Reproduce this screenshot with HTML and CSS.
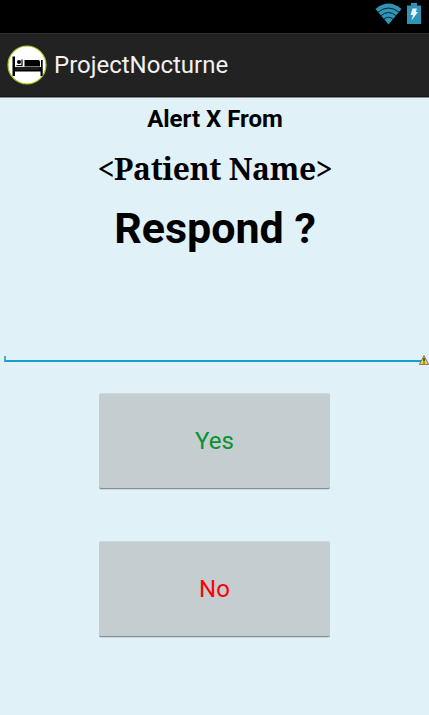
FILE: index.html
```
<!DOCTYPE html>
<html lang="en">
<head>
<meta charset="utf-8">
<title>ProjectNocturne</title>
<link rel="stylesheet" href="styles.css">
</head>
<body>
<div class="status">
  <svg class="wifi" width="27" height="22" viewBox="0 0 27 22"><path d="M0.500 6Q13.500-5 26.500 6L13.500 21.500Z" fill="#3094b7"/><path d="M2.500 9.500Q13.500 .5 24.500 9.500M5.500 13Q13.500 6 21.500 13M8.500 16.400Q13.500 12 18.500 16.400" fill="none" stroke="#0b2029" stroke-width="1"/></svg>
  <svg class="battery" width="14" height="22" viewBox="0 0 14 22"><path d="M0 2.500h4V0h6v2.500h4V21H0Z" fill="#3094b7"/><path d="M5.500 5.500h4.500L8.800 9H11L4.500 17.500L6 12H3.500Z" fill="#e5f5fb"/></svg>
</div>
<header class="bar">
  <svg class="logo" width="40" height="40" viewBox="0 0 40 40"><circle cx="20" cy="20" r="19" fill="#fff" stroke="#a4c51c" stroke-width="1.200"/><path d="M5.500 11.500h2.500v10.500h26v-7h1.700v16h-2.200v-4.500H8v4.500H5.500Z" fill="#000"/><circle cx="12" cy="17" r="2" fill="#000"/><path d="M9.500 20.500h5.500v-6" fill="none" stroke="#000" stroke-width="1.200"/><path d="M17.500 15h14.500l1 1.500v5h-15.500Z" fill="#000"/><path d="M8.500 24h24M8 22h25" stroke="#777" stroke-width=".5"/></svg>
  <h1 class="title">ProjectNocturne</h1>
</header>
<main class="content">
  <p class="alert">Alert X From</p>
  <p class="patient">&lt;Patient Name&gt;</p>
  <p class="respond">Respond ?</p>
  <div class="field">
    <svg class="warning" width="10" height="10" viewBox="0 0 10 10"><path d="M5 .6L9.600 9.400H.4Z" fill="#f7d651" stroke="#776b43" stroke-width=".9"/><path d="M5 3v3.500M5 7.500v1" stroke="#171717" stroke-width="1.300"/></svg>
  </div>
  <button class="btn yes">Yes</button>
  <button class="btn no">No</button>
</main>
</body>
</html>
```
FILE: styles.css
```
* { box-sizing: border-box; }
body { margin: 0; width: 429px; height: 715px; overflow: hidden; background: #e0f1f8; font-family: Roboto, sans-serif; display: flex; flex-direction: column; }
.status { height: 33px; flex: none; background: #000; display: flex; justify-content: flex-end; gap: 5px; padding: 3px 8px 0 0; }
.bar { height: 65px; flex: none; background: #222; border-top: 1px solid #303030; border-bottom: 1px solid #858b8e; box-shadow: inset 0 -1px #171717; display: flex; align-items: center; padding: 0 0 2px 7px; }
.title { margin: 0 0 0 7px; font-size: 24px; line-height: 28px; font-weight: 400; color: #f1f1f1; }
.content { flex: 1; display: flex; flex-direction: column; align-items: center; }
p { margin: 0; color: #000; white-space: nowrap; font-weight: 700; }
.alert { font-size: 24px; line-height: 28px; margin-top: 7px; padding-left: 1px; }
.patient { font-family: "Noto Serif", "Droid Serif", "Liberation Serif", serif; font-size: 30px; line-height: 40px; margin-top: 16px; letter-spacing: -0.3px; padding-left: 1px; }
.respond { font-size: 43px; line-height: 50px; margin-top: 14px; padding-left: 1px; }
.field { align-self: stretch; position: relative; height: 6px; margin: 103px 5px 0 4px; border-left: 2px solid #45b1d8; border-bottom: 2px solid #139fcf; }
.warning { position: absolute; right: -5px; top: -1px; }
.btn { width: 231px; height: 96px; padding: 0 0 1px; border: 0; border-top: 1px solid #ced7d9; border-bottom: 1px solid #848f93; border-radius: 2px; background: #c4cdcf; box-shadow: 0 1px #cbd9df; font: 24px/28px Roboto, sans-serif; }
.yes { margin-top: 31px; color: #0b9130; }
.no { margin-top: 52px; color: #f00; }
```
